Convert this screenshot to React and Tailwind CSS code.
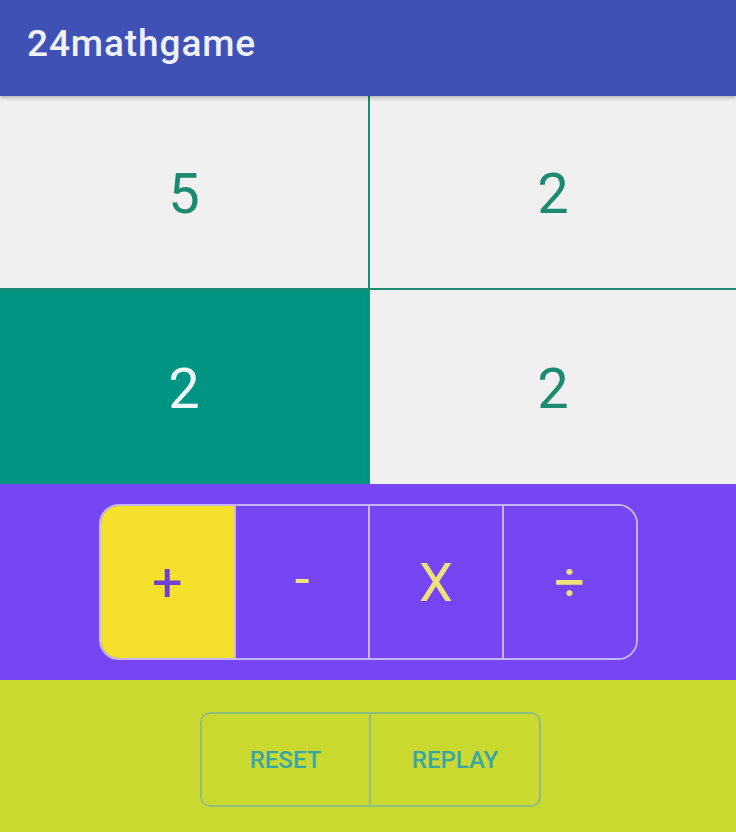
import React, { useState } from "react";

const font = { fontFamily: "Roboto, 'Noto Sans', sans-serif" };

const cards = [
  { id: 0, value: 5 },
  { id: 1, value: 2 },
  { id: 2, value: 2 },
  { id: 3, value: 2 },
];

const ops = ["+", "-", "X", "÷"];

export default function App() {
  const [picked, setPicked] = useState(2);
  const [op, setOp] = useState(0);

  return (
    <div className="w-[736px] h-[832px] flex flex-col bg-[#f0f0f0]" style={font}>
      <header className="h-[96px] bg-[#3f51b5] flex items-center px-[27px] shadow-[0_2px_4px_rgba(0,0,0,0.25)] z-10">
        <h1 className="text-[37px] font-medium text-[#eef0fa] tracking-[0.9px] -mt-[8px]">24mathgame</h1>
      </header>

      <div className="grid grid-cols-[370px_366px] grid-rows-[194px_194px]">
        {cards.map((c, i) => (
          <button
            key={c.id}
            type="button"
            onClick={() => setPicked(i)}
            className={
              "flex items-center justify-center text-[56px] leading-none border-[#1d8a72] " +
              (i % 2 === 0 ? "border-r-2 " : "") +
              (i < 2 ? "border-b-2 " : "") +
              (picked === i ? "bg-[#009485] text-[#eefaf7]" : "bg-[#f0f0f0] text-[#1b8a70]")
            }
          >
            <span className="mt-[4px]">{c.value}</span>
          </button>
        ))}
      </div>

      <div className="h-[196px] bg-[#7646f2] flex items-center justify-center">
        <div className="w-[539px] h-[156px] rounded-[20px] border-2 border-[#c7b4f6] overflow-hidden grid grid-cols-4">
          {ops.map((o, i) => (
            <button
              key={o}
              type="button"
              onClick={() => setOp(i)}
              className={
                "flex items-center justify-center text-[54px] leading-none " +
                (i > 0 ? "border-l-2 border-[#c7b4f6] " : "") +
                (op === i ? "bg-[#f5e12b] text-[#6e3fd8]" : "bg-[#7646f2] text-[#f0e27a]")
              }
            >
              <span className={o === "-" ? "-mt-[6px]" : "mt-[2px]"}>{o}</span>
            </button>
          ))}
        </div>
      </div>

      <div className="flex-1 bg-[#c9d930] flex justify-center pt-[32px]">
        <div className="w-[341px] h-[95px] ml-[5px] rounded-[10px] border-2 border-[#8fbf7c] grid grid-cols-[169px_1fr]">
          <button type="button" className="border-r-2 border-[#8fbf7c] text-[24px] font-medium text-[#3aa6a4]">
            RESET
          </button>
          <button type="button" className="text-[24px] font-medium text-[#3aa6a4]">
            REPLAY
          </button>
        </div>
      </div>
    </div>
  );
}
